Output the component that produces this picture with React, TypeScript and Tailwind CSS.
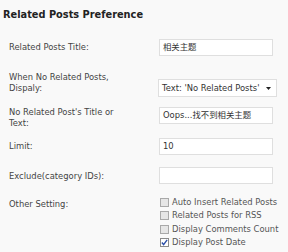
const font = { fontFamily: '"DejaVu Sans", Verdana, "Noto Sans CJK SC", sans-serif' }

function Box({ checked = false }: { checked?: boolean }) {
  return (
    <span
      className={`w-[9px] h-[9px] border flex items-center justify-center shrink-0 ${
        checked ? "border-[#8a8a8a] bg-white" : "border-[#a9a9a9] bg-[#e6e6e6]"
      }`}
    >
      {checked && (
        <svg className="w-[7px] h-[7px]" viewBox="0 0 8 8" fill="none">
          <path d="M1 4l2 2.5L7 1" stroke="#2b4fa8" strokeWidth={1.6} />
        </svg>
      )}
    </span>
  )
}

const OPTIONS = [
  { label: "Auto Insert Related Posts", checked: false },
  { label: "Related Posts for RSS", checked: false },
  { label: "Display Comments Count", checked: false },
  { label: "Display Post Date", checked: true },
]

export default function App() {
  return (
    <div className="w-[288px] h-[252px] bg-[#f9f9f9] overflow-hidden text-[#444]" style={font}>
      <h2 className="pt-[8px] pl-[3px] text-[9.8px] leading-[14px] font-bold text-[#222]">
        Related Posts Preference
      </h2>

      <div className="pl-[9px] text-[8.4px]">
        {/* Title */}
        <div className="mt-[17px] flex items-start">
          <div className="w-[150px] pt-[3px] leading-[11px]">Related Posts Title:</div>
          <div className="w-[114px] h-[17px] border border-[#dfdfdf] bg-white px-[3px] leading-[15px] text-[#333]">
            相关主题
          </div>
        </div>

        {/* No posts display */}
        <div className="mt-[16px] flex items-start">
          <div className="w-[149px] leading-[11px]">
            When No Related Posts,
            <br />
            Dispaly:
          </div>
          <div className="mt-[7px] w-[119px] h-[18px] border border-[#dfdfdf] bg-white pl-[3px] pr-[5px] flex items-center justify-between whitespace-nowrap text-[#333]">
            <span>Text: 'No Related Posts'</span>
            <svg className="w-[5px] h-[3px]" viewBox="0 0 5 3">
              <path d="M0 0h5L2.5 3z" fill="#222" />
            </svg>
          </div>
        </div>

        {/* No posts title */}
        <div className="mt-[10px] flex items-start">
          <div className="w-[150px] leading-[11px]">
            No Related Post's Title or
            <br />
            Text:
          </div>
          <div className="w-[114px] h-[17px] border border-[#dfdfdf] bg-white px-[3px] leading-[15px] whitespace-nowrap text-[#333]">
            Oops...找不到相关主题
          </div>
        </div>

        {/* Limit */}
        <div className="mt-[9px] flex items-start">
          <div className="w-[150px] pt-[3px] leading-[11px]">Limit:</div>
          <div className="w-[114px] h-[17px] border border-[#dfdfdf] bg-white px-[3px] leading-[15px] text-[#333]">
            10
          </div>
        </div>

        {/* Exclude */}
        <div className="mt-[12px] flex items-start">
          <div className="w-[150px] pt-[4px] leading-[11px]">Exclude(category IDs):</div>
          <div className="w-[114px] h-[17px] border border-[#dfdfdf] bg-white" />
        </div>

        {/* Other */}
        <div className="mt-[12px] flex items-start">
          <div className="w-[151px] pt-[3px] leading-[11px]">Other Setting:</div>
          <div className="flex flex-col text-[#555]">
            {OPTIONS.map((o) => (
              <label key={o.label} className="h-[13.3px] flex items-center gap-[3px] leading-[13px] whitespace-nowrap">
                <Box checked={o.checked} />
                {o.label}
              </label>
            ))}
          </div>
        </div>
      </div>
    </div>
  )
}
